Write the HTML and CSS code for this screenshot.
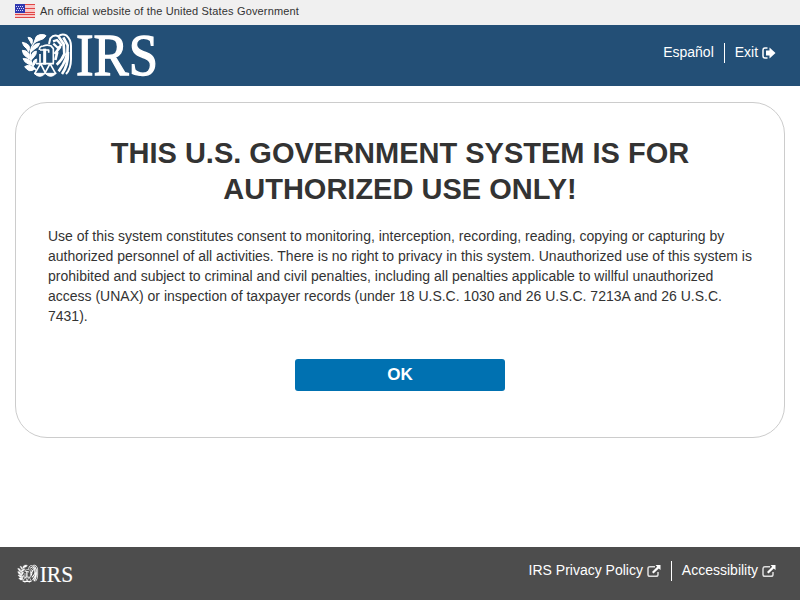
FILE: index.html
```html
<!DOCTYPE html>
<html lang="en">
<head>
<meta charset="utf-8">
<title>IRS</title>
<link rel="stylesheet" href="styles.css">
</head>
<body>
<svg class="defs" width="0" height="0" aria-hidden="true">
  <symbol id="emblem" viewBox="0 0 180 150">
    <path fill="#fff" stroke="#fff" stroke-width="3" stroke-linejoin="round" d="M13 37Q15 48 26 56L32 65Q37 56 33 47Q27 39 13 37ZM13 61Q14 74 25 81L35 88Q38 76 31 68Q24 61 13 61ZM15 86Q20 98 31 102L42 105Q42 96 34 90Q27 85 15 86ZM20 110Q31 102 40 108L52 116Q42 124 34 122Q26 119 20 110ZM30 22Q32 28 36 33L41 43Q46 34 42 27Q39 22 30 22ZM51 29Q53 16 65 14Q80 12 84 17Q78 28 66 30L48 38ZM43 52Q50 40 65 40Q62 52 51 56L38 67Q37 58 43 52ZM40 76Q44 64 55 63Q56 73 49 80L39 91Q36 83 40 76ZM45 97Q48 88 56 87Q58 96 52 100L46 108Q43 103 45 97Z"/>
    <g fill="none" stroke="#fff" stroke-width="8" stroke-linejoin="round">
      <path stroke-width="4" d="M54 33Q36 48 37 76Q38 107 54 121"/>
      <path stroke-width="5" d="M64 60Q64 48 76 48Q86 43 98 47L106 56V100M66 60H92V68M66 72V98"/>
      <path stroke-width="9" d="M80 56V104"/>
      <path stroke-width="5" d="M54 101H108M68 101L50 131M68 101L83 131M96 101L80 131M96 101L113 131"/>
      <path fill="#fff" stroke-width="3" d="M48 130H82Q66 148 48 130ZM81 130H115Q98 148 81 130Z"/>
      <path stroke-width="6" d="M93 42L97 25Q108 12 121 19Q132 9 146 17Q159 29 159 48V87Q159 116 144 132"/>
      <path stroke-width="7" d="M105 34L117 30L130 45L120 54L106 41"/>
      <path d="M122 20L137 42L139 72Q132 90 116 104M136 22L149 46Q152 84 122 124M127 50L110 72M150 66Q151 106 132 132M118 66L112 90"/>
    </g>
  </symbol>
  <symbol id="external" viewBox="0 0 14 14">
    <path d="M8 2.8H3Q1 2.8 1 4.8V10.5Q1 12.3 3 12.3H9Q11 12.3 11 10.5V8" fill="none" stroke="#ddd" stroke-width="1.5"/>
    <path d="M8.5 1H13.5V6L11.8 4.5L6.5 9.6L5 8.1L10.2 2.7Z" fill="#fff"/>
  </symbol>
</svg>
<div class="banner">
  <svg class="flag" viewBox="0 0 20 14">
    <path fill="#f9c8c8" d="M0 0H20V14H0Z"/>
    <path fill="#e04545" d="M0 0H20V1H0ZM0 4H20V5H0ZM0 8H20V9H0ZM0 10H20V11H0ZM0 13H20V14H0Z"/>
    <path fill="#3038b0" d="M0 0H10V9H0Z"/>
    <path stroke="#d5d8f8" stroke-dasharray="1 1" d="M1 2.5H9M2 4.5H9M1 6.5H9"/>
  </svg>
  <span>An official website of the United States Government</span>
</div>
<header class="header">
  <svg class="logo" viewBox="0 0 142 50">
    <use href="#emblem" width="60" height="50"/>
    <text class="logo-text" x="58" y="45" textLength="82" lengthAdjust="spacingAndGlyphs">IRS</text>
  </svg>
  <nav class="links">
    <a>Español</a>
    <a class="divided">Exit <svg class="exit" viewBox="0 0 14 12"><path d="M5.5 1H3Q1 1 1 3V9Q1 11 3 11H5.5" fill="none" stroke="#fff" stroke-width="1.5"/><path fill="#fff" d="M4 3.6H7.5V.5L13.5 6L7.5 11.5V8.4H4Z"/></svg></a>
  </nav>
</header>
<main class="card">
  <h1>THIS U.S. GOVERNMENT SYSTEM IS FOR AUTHORIZED USE ONLY!</h1>
  <p>Use of this system constitutes consent to monitoring, interception, recording, reading, copying or capturing by authorized personnel of all activities. There is no right to privacy in this system. Unauthorized use of this system is prohibited and subject to criminal and civil penalties, including all penalties applicable to willful unauthorized access (UNAX) or inspection of taxpayer records (under 18 U.S.C. 1030 and 26 U.S.C. 7213A and 26 U.S.C. 7431).</p>
  <button class="ok">OK</button>
</main>
<footer class="footer">
  <svg class="logo-small" viewBox="0 0 142 50">
    <use href="#emblem" width="60" height="50"/>
    <text class="logo-text" x="58" y="45" textLength="82" lengthAdjust="spacingAndGlyphs">IRS</text>
  </svg>
  <nav class="links">
    <a>IRS Privacy Policy <svg class="ext"><use href="#external"/></svg></a>
    <a class="divided">Accessibility <svg class="ext"><use href="#external"/></svg></a>
  </nav>
</footer>
</body>
</html>
```
FILE: styles.css
```css
* { box-sizing: border-box; }
body {
  margin: 0;
  height: 600px;
  display: flex;
  flex-direction: column;
  overflow: hidden;
  background: #fff;
  color: #333;
  font: 14px/20px "Liberation Sans", Arial, sans-serif;
}
.defs { position: absolute; }
.banner {
  height: 25px;
  padding: 0 15px 3px;
  display: flex;
  align-items: center;
  gap: 5px;
  background: #f0f0f0;
  font-size: 11px;
  letter-spacing: .155px;
}
.flag { width: 20px; height: 14px; }
.header {
  height: 61px;
  padding: 5px 24px 0 18px;
  display: flex;
  justify-content: space-between;
  align-items: flex-start;
  background: #234f76;
}
.logo, .logo-small { overflow: visible; }
.logo { width: 142px; height: 50px; }
.logo-text {
  font: 59px "Liberation Serif", "Times New Roman", serif;
  fill: #fff;
  stroke: #fff;
  stroke-width: 1.3px;
}
.logo-small .logo-text { stroke-width: .4px; }
.links {
  display: flex;
  color: #fff;
}
.links a { height: 20px; line-height: 18px; }
.header .links { padding-top: 13px; }
.links .divided {
  margin-left: 10px;
  padding-left: 10px;
  border-left: 1px solid #fff;
}
.exit { width: 14px; height: 12px; vertical-align: -2px; }
.ext { width: 14px; height: 14px; vertical-align: -3px; }
.card {
  margin: 16px 15px 0;
  height: 336px;
  padding: 32px;
  border: 1px solid #ccc;
  border-radius: 32px;
}
h1 {
  margin: 0 0 19px;
  font-size: 29px;
  line-height: 36px;
  text-align: center;
}
p { margin: 0; }
.ok {
  display: block;
  width: 210px;
  height: 32px;
  margin: 33px auto 0;
  padding: 0;
  border: 0;
  border-radius: 3px;
  background: #0071b1;
  color: #fff;
  font: bold 17px/32px "Liberation Sans", Arial, sans-serif;
}
.footer {
  height: 53px;
  margin-top: auto;
  padding: 14px 24px 0 16px;
  display: flex;
  justify-content: space-between;
  align-items: flex-start;
  background: #4d4d4d;
}
.logo-small { width: 58px; height: 21px; margin-top: 2px; }
```
